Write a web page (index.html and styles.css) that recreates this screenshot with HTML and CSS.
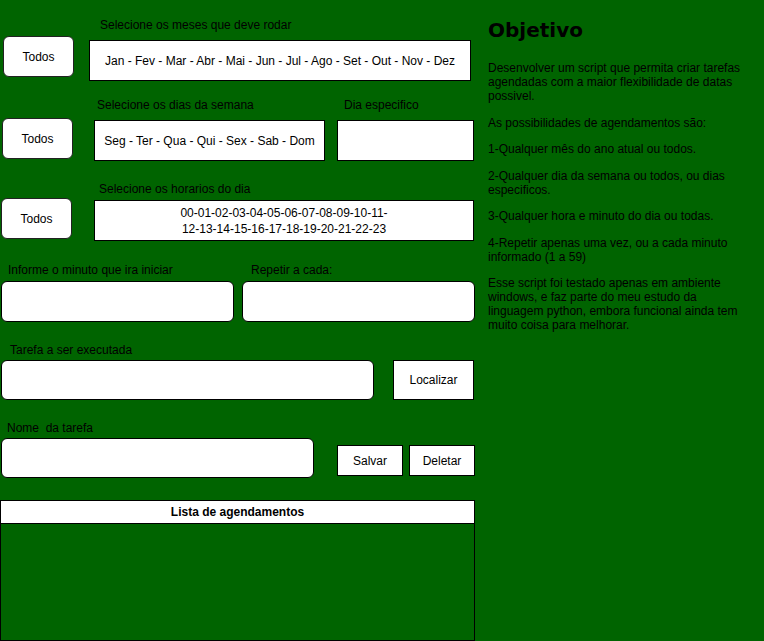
FILE: index.html
```html
<!DOCTYPE html>
<html lang="pt">
<head>
<meta charset="utf-8">
<title>Agendador de tarefas</title>
<link rel="stylesheet" href="styles.css">
</head>
<body>
<div class="page">
  <div class="left">
    <div class="label l1">Selecione os meses que deve rodar</div>
    <div class="row r1">
      <div class="btn-todos t1">Todos</div>
      <div class="box months">Jan - Fev - Mar - Abr - Mai - Jun - Jul - Ago - Set - Out - Nov - Dez</div>
    </div>

    <div class="labels l2">
      <div class="lab-a">Selecione os dias da semana</div>
      <div class="lab-b">Dia especifico</div>
    </div>
    <div class="row r2">
      <div class="btn-todos t2">Todos</div>
      <div class="box days">Seg - Ter - Qua - Qui - Sex - Sab - Dom</div>
      <div class="box dia"></div>
    </div>

    <div class="label l3">Selecione os horarios do dia</div>
    <div class="row r3">
      <div class="btn-todos t3">Todos</div>
      <div class="box hours">00-01-02-03-04-05-06-07-08-09-10-11-<br>12-13-14-15-16-17-18-19-20-21-22-23</div>
    </div>

    <div class="labels l4">
      <div class="lab-c">Informe o minuto que ira iniciar</div>
      <div class="lab-d">Repetir a cada:</div>
    </div>
    <div class="row r4">
      <div class="input in-min"></div>
      <div class="input in-rep"></div>
    </div>

    <div class="label l5">Tarefa a ser executada</div>
    <div class="row r5">
      <div class="input in-task"></div>
      <div class="sqbtn localizar">Localizar</div>
    </div>

    <div class="label l6">Nome &nbsp;da tarefa</div>
    <div class="row r6">
      <div class="input in-name"></div>
      <div class="sqbtn salvar">Salvar</div>
      <div class="sqbtn deletar">Deletar</div>
    </div>

    <div class="lista">
      <div class="lista-head">Lista de agendamentos</div>
      <div class="lista-body"></div>
    </div>
  </div>

  <div class="right">
    <h1 class="title">Objetivo</h1>
    <p>Desenvolver um script que permita criar tarefas agendadas com a maior flexibilidade de datas possivel.</p>
    <p>As possibilidades de agendamentos são:</p>
    <p>1-Qualquer mês do ano atual ou todos.</p>
    <p>2-Qualquer dia da semana ou todos, ou dias especificos.</p>
    <p>3-Qualquer hora e minuto do dia ou todas.</p>
    <p>4-Repetir apenas uma vez, ou a cada minuto informado (1 a 59)</p>
    <p>Esse script foi testado apenas em ambiente windows, e faz parte do meu estudo da linguagem python, embora funcional ainda tem muito coisa para melhorar.</p>
  </div>
</div>
</body>
</html>
```

FILE: styles.css
```css
* { box-sizing: border-box; }

html, body {
  margin: 0;
  padding: 0;
  background: #006400;
  height: 641px;
  overflow: hidden;
}

body {
  font-family: "Liberation Sans", Arial, sans-serif;
  font-size: 12px;
  line-height: 14px;
  color: #000;
}

.page {
  display: flex;
  align-items: flex-start;
}

.left {
  width: 475px;
  flex: none;
}

.label {
  height: 14px;
  white-space: nowrap;
}

.labels {
  display: flex;
  height: 14px;
  white-space: nowrap;
}

.row {
  display: flex;
  align-items: flex-start;
}

.btn-todos {
  width: 71px;
  height: 41px;
  background: #fff;
  border: 1px solid #222;
  border-radius: 6px;
  display: flex;
  align-items: center;
  justify-content: center;
}

.box {
  height: 41px;
  background: #fff;
  border: 1px solid #000;
  display: flex;
  align-items: center;
  justify-content: center;
  text-align: center;
  white-space: nowrap;
}

.input {
  background: #fff;
  border: 1px solid #000;
  border-radius: 6px;
}

.sqbtn {
  background: #fff;
  border: 1px solid #000;
  display: flex;
  align-items: center;
  justify-content: center;
}

/* section 1 */
.l1 { margin-top: 18px; margin-left: 100px; }
.r1 { margin-top: 4px; }
.t1 { margin-left: 3px; }
.months { margin-left: 15px; margin-top: 4px; width: 382px; }

/* section 2 */
.l2 { margin-top: 17px; }
.lab-a { margin-left: 97px; width: 247px; }
.r2 { margin-top: 6px; }
.t2 { margin-left: 2px; }
.days { margin-left: 21px; margin-top: 2px; width: 231px; }
.dia { margin-left: 12px; margin-top: 2px; width: 137px; }

/* section 3 */
.l3 { margin-top: 21px; margin-left: 99px; }
.r3 { margin-top: 2px; }
.t3 { margin-left: 1px; }
.hours { margin-left: 22px; margin-top: 2px; width: 380px; line-height: 16px; }

/* section 4 */
.l4 { margin-top: 22px; }
.lab-c { margin-left: 8px; width: 243px; }
.r4 { margin-top: 4px; }
.in-min { margin-left: 1px; width: 233px; height: 41px; }
.in-rep { margin-left: 8px; width: 233px; height: 41px; }

/* section 5 */
.l5 { margin-top: 21px; margin-left: 10px; }
.r5 { margin-top: 3px; }
.in-task { margin-left: 1px; width: 373px; height: 40px; }
.localizar { margin-left: 19px; width: 81px; height: 40px; }

/* section 6 */
.l6 { margin-top: 21px; margin-left: 7px; }
.r6 { margin-top: 3px; }
.in-name { margin-left: 1px; width: 313px; height: 40px; }
.salvar { margin-left: 23px; margin-top: 7px; width: 66px; height: 31px; }
.deletar { margin-left: 6px; margin-top: 7px; width: 66px; height: 31px; }

/* lista */
.lista {
  margin-top: 22px;
  width: 475px;
  height: 141px;
  border: 1px solid #000;
  display: flex;
  flex-direction: column;
}

.lista-head {
  height: 23px;
  background: #fff;
  border-bottom: 1px solid #000;
  font-weight: bold;
  text-align: center;
  display: flex;
  align-items: center;
  justify-content: center;
}

.lista-body {
  flex: 1;
  background: #006400;
}

/* right column */
.right {
  margin-left: 13px;
  width: 260px;
  flex: none;
}

.title {
  font-family: "DejaVu Sans", Verdana, sans-serif;
  font-weight: bold;
  font-size: 20px;
  line-height: 24px;
  margin: 18px 0 0 0;
}

.right p {
  margin: 12.5px 0 0 0;
}

.title + p {
  margin-top: 19px;
}
```
